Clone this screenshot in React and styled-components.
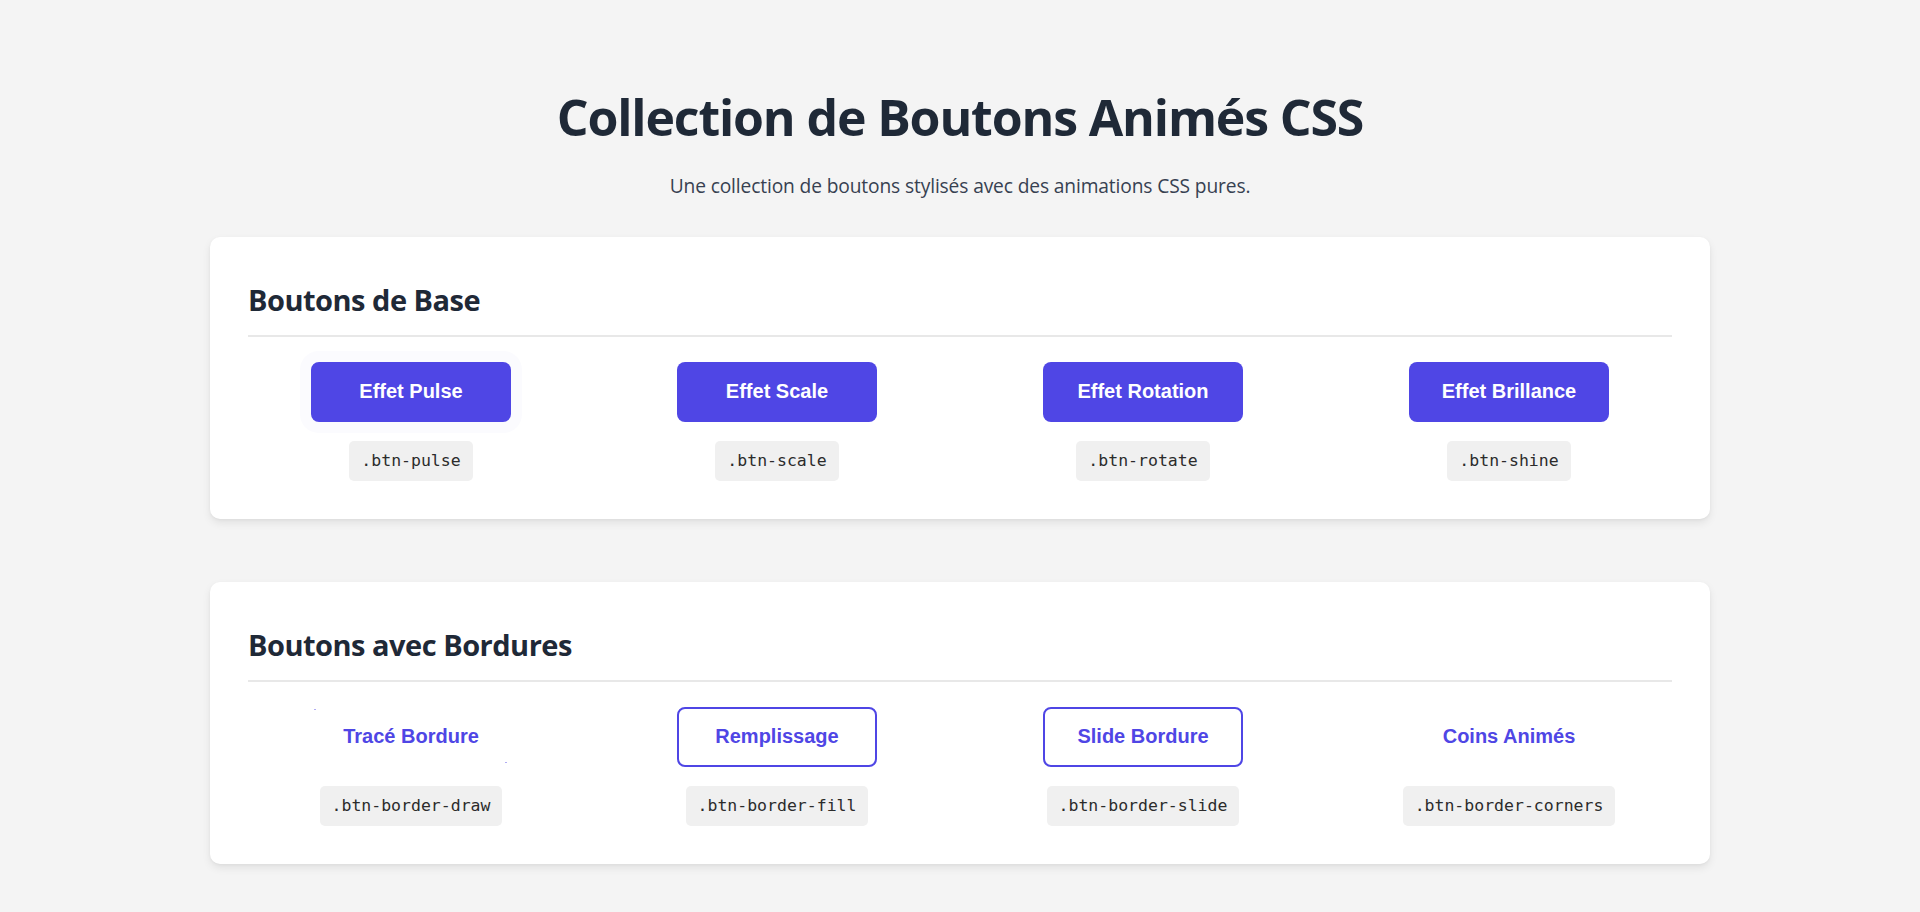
import React from "react";
import styled, { createGlobalStyle, css } from "styled-components";

const GlobalStyle = createGlobalStyle`
  html, body {
    margin: 0;
    padding: 0;
    background: #f4f4f4;
  }
  body {
    font-family: "Open Sans", "Noto Sans", sans-serif;
    color: #1f2937;
  }
`;

const Page = styled.main`
  max-width: 1500px;
  margin: 0 auto;
  padding: 87px 0 48px;
`;

const Title = styled.h1`
  margin: 0;
  text-align: center;
  font-size: 50px;
  line-height: 60px;
  font-weight: 700;
  letter-spacing: -1.15px;
  color: #1f2937;
`;

const Subtitle = styled.p`
  margin: 25px 0 36px;
  text-align: center;
  font-size: 19.2px;
  line-height: 28.8px;
  letter-spacing: -0.13px;
  color: #374151;
`;

const Card = styled.section`
  background: #ffffff;
  border-radius: 10px;
  padding: 38px;
  box-shadow: 0 4px 8px rgba(0, 0, 0, 0.08), 0 1px 3px rgba(0, 0, 0, 0.04);
  & + & {
    margin-top: 63px;
  }
`;

const SectionTitle = styled.h2`
  margin: 0 0 25px;
  padding-bottom: 10px;
  border-bottom: 2px solid #e8e8e8;
  font-size: 29px;
  line-height: 50px;
  font-weight: 700;
  letter-spacing: -0.5px;
  color: #1f2937;
`;

const Grid = styled.div`
  display: grid;
  grid-template-columns: repeat(4, 1fr);
  gap: 40px;
`;

const Item = styled.div`
  display: flex;
  flex-direction: column;
  align-items: center;
  gap: 19px;
`;

const variants = {
  solid: css`
    background: #4f46e5;
    color: #ffffff;
    border: none;
  `,
  pulse: css`
    background: #4f46e5;
    color: #ffffff;
    border: none;
    box-shadow: 0 0 0 11px rgba(79, 70, 229, 0.025);
  `,
  outline: css`
    background: #ffffff;
    color: #4f46e5;
    border: 2px solid #4f46e5;
  `,
  ghost: css`
    background: transparent;
    color: #4f46e5;
    border: none;
  `,
  draw: css`
    background: transparent;
    color: #4f46e5;
    border: none;
    &::before,
    &::after {
      content: "";
      position: absolute;
      width: 2px;
      height: 1px;
      background: rgba(79, 70, 229, 0.45);
    }
    &::before {
      top: 2px;
      left: 3px;
    }
    &::after {
      bottom: 4px;
      right: 4px;
    }
  `,
};

const DemoButton = styled.button`
  position: relative;
  box-sizing: border-box;
  width: 200px;
  height: 60px;
  border-radius: 8px;
  font-family: "Liberation Sans", Arial, sans-serif;
  font-size: 20px;
  font-weight: 700;
  cursor: pointer;
  ${({ $variant }) => variants[$variant]}
`;

const Code = styled.code`
  display: inline-block;
  padding: 8px 12px;
  background: #f0f0f0;
  border-radius: 5px;
  font-family: "DejaVu Sans Mono", "Liberation Mono", monospace;
  font-size: 16.5px;
  line-height: 24px;
  color: #2b2b2b;
`;

const sections = [
  {
    title: "Boutons de Base",
    items: [
      { label: "Effet Pulse", cls: ".btn-pulse", variant: "pulse" },
      { label: "Effet Scale", cls: ".btn-scale", variant: "solid" },
      { label: "Effet Rotation", cls: ".btn-rotate", variant: "solid" },
      { label: "Effet Brillance", cls: ".btn-shine", variant: "solid" },
    ],
  },
  {
    title: "Boutons avec Bordures",
    items: [
      { label: "Tracé Bordure", cls: ".btn-border-draw", variant: "draw" },
      { label: "Remplissage", cls: ".btn-border-fill", variant: "outline" },
      { label: "Slide Bordure", cls: ".btn-border-slide", variant: "outline" },
      { label: "Coins Animés", cls: ".btn-border-corners", variant: "ghost" },
    ],
  },
];

export default function App() {
  return (
    <>
      <GlobalStyle />
      <Page>
        <Title>Collection de Boutons Animés CSS</Title>
        <Subtitle>Une collection de boutons stylisés avec des animations CSS pures.</Subtitle>
        {sections.map((s) => (
          <Card key={s.title}>
            <SectionTitle>{s.title}</SectionTitle>
            <Grid>
              {s.items.map((it) => (
                <Item key={it.cls}>
                  <DemoButton $variant={it.variant}>{it.label}</DemoButton>
                  <Code>{it.cls}</Code>
                </Item>
              ))}
            </Grid>
          </Card>
        ))}
      </Page>
    </>
  );
}
